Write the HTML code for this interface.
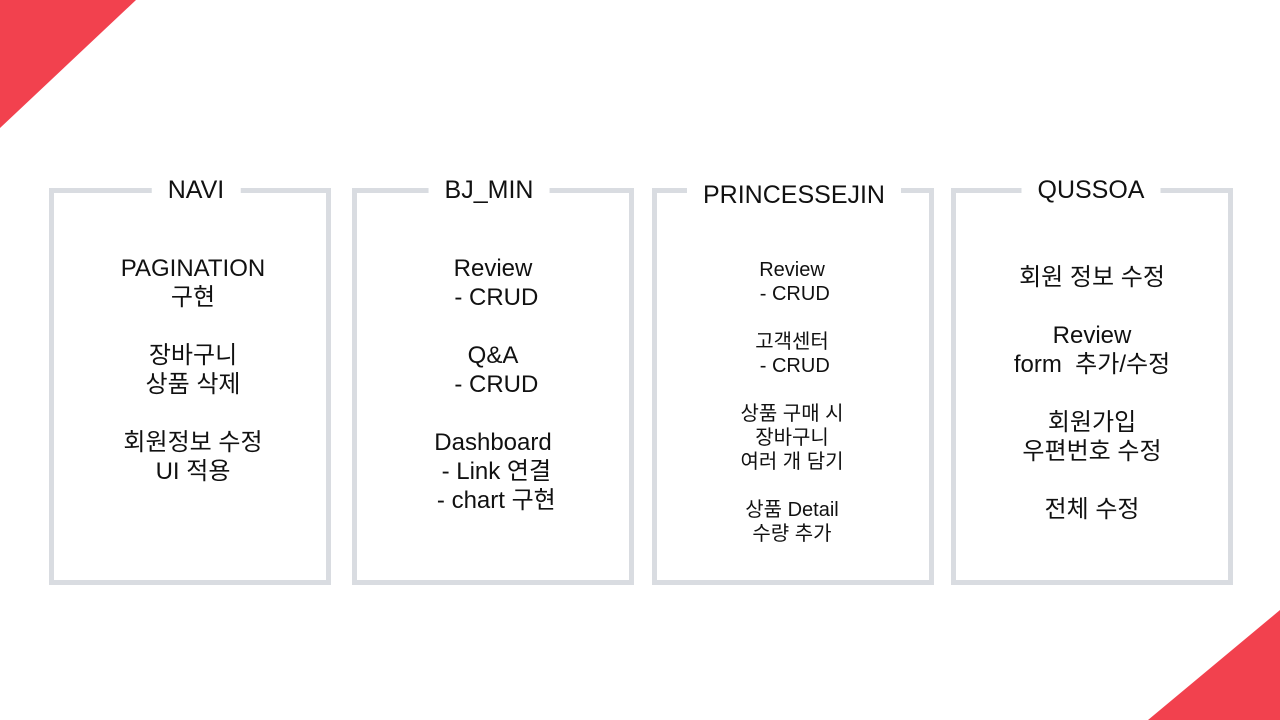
<!DOCTYPE html>
<html><head><meta charset="utf-8"><style>
body{margin:0;width:1280px;height:720px;position:relative;background:#fff;overflow:hidden;font-family:"Liberation Sans","Noto Sans CJK KR",sans-serif;color:#111}
.box{position:absolute;top:188px;height:387px;width:272px;border:5px solid #d9dce1;box-sizing:content-box}
.t{position:absolute;text-align:center;white-space:pre;transform:translateX(-50%)}
.h{font-size:25px;background:#fff;padding:0 16px;line-height:30px}
.l{font-size:24px;line-height:29px}
.s{font-size:20px;line-height:24px}
</style></head><body>
<svg width="1280" height="720" style="position:absolute;left:0;top:0">
<polygon points="0,0 136,0 0,128" fill="#f2414e"/>
<polygon points="1280,610 1280,720 1148,720" fill="#f2414e"/>
</svg>
<div class="box" style="left:49px"></div>
<div class="box" style="left:352px"></div>
<div class="box" style="left:652px"></div>
<div class="box" style="left:951px"></div>

<div class="t h" style="left:196px;top:175px">NAVI</div>
<div class="t h" style="left:489px;top:175px">BJ_MIN</div>
<div class="t h" style="left:794px;top:180px">PRINCESSEJIN</div>
<div class="t h" style="left:1091px;top:175px">QUSSOA</div>

<div class="t l" style="left:193px;top:254px">PAGINATION
구현

장바구니
상품 삭제

회원정보 수정
UI 적용</div>
<div class="t l" style="left:493px;top:254px">Review
 - CRUD

Q&amp;A
 - CRUD

Dashboard
 - Link 연결
 - chart 구현</div>
<div class="t s" style="left:792px;top:258px">Review
 - CRUD

고객센터
 - CRUD

상품 구매 시
장바구니
여러 개 담기

상품 Detail
수량 추가</div>
<div class="t l" style="left:1092px;top:263px">회원 정보 수정

Review
form  추가/수정

회원가입
우편번호 수정

전체 수정</div>
</body></html>
